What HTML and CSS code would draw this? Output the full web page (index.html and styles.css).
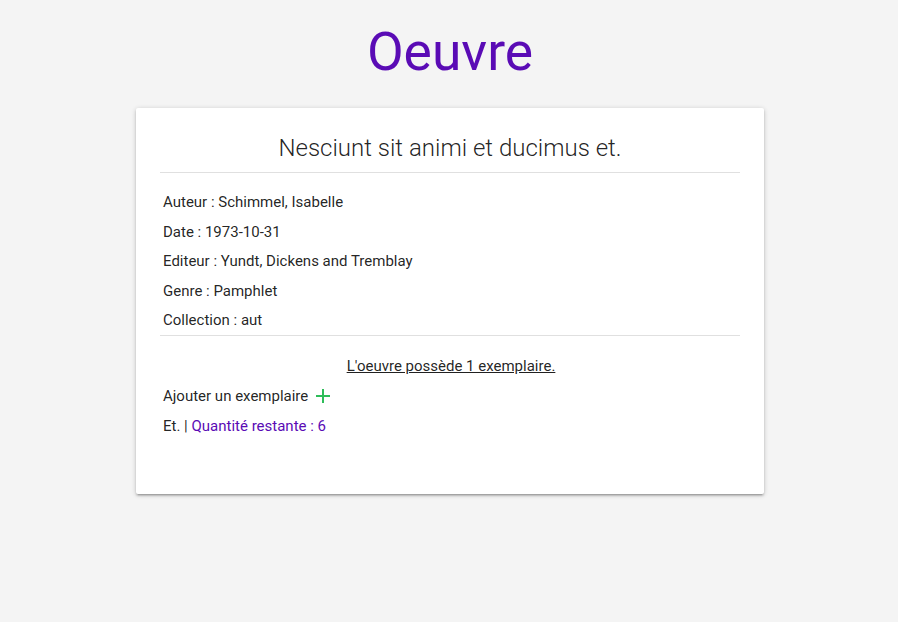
FILE: index.html
```html
<!DOCTYPE html>
<html lang="fr">
<head>
<meta charset="utf-8">
<title>Oeuvre</title>
<link rel="stylesheet" href="styles.css">
</head>
<body>
<main class="container">
  <h1 class="page-title">Oeuvre</h1>
  <section class="card">
    <h2 class="card-title">Nesciunt sit animi et ducimus et.</h2>
    <hr class="divider">
    <ul class="details">
      <li>Auteur : Schimmel, Isabelle</li>
      <li>Date : 1973-10-31</li>
      <li>Editeur : Yundt, Dickens and Tremblay</li>
      <li>Genre : Pamphlet</li>
      <li>Collection : aut</li>
    </ul>
    <hr class="divider divider-tight">
    <p class="count">L'oeuvre possède 1 exemplaire.</p>
    <p class="add">Ajouter un exemplaire
      <svg class="plus" width="14" height="14" viewBox="0 0 14 14"><path d="M7 0v14M0 7h14" stroke="#2ebd59" stroke-width="2" fill="none"/></svg>
    </p>
    <p class="copy">Et. | <span class="qty">Quantité restante : 6</span></p>
  </section>
</main>
</body>
</html>
```
FILE: styles.css
```css
html, body {
  margin: 0;
  padding: 0;
}
body {
  background: #f4f4f4;
  font-family: Roboto, "Liberation Sans", sans-serif;
  font-size: 15px;
  color: rgba(0,0,0,0.87);
  padding-left: 2px;
}
.container {
  width: 628px;
  margin: 0 auto;
  padding-bottom: 40px;
}
.page-title {
  margin: 0;
  padding-top: 20px;
  height: 108px;
  box-sizing: border-box;
  text-align: center;
  font-weight: 400;
  font-size: 53.4px;
  line-height: 64px;
  color: #5a0bb5;
}
.card {
  background: #fff;
  border-radius: 2px;
  padding: 24px 24px 53px;
  box-shadow: 0 2px 2px 0 rgba(0,0,0,0.14), 0 3px 1px -2px rgba(0,0,0,0.12), 0 1px 5px 0 rgba(0,0,0,0.2);
}
.card-title {
  margin: 0;
  text-align: center;
  font-weight: 300;
  font-size: 24px;
  line-height: 32px;
  color: rgba(0,0,0,0.87);
}
.divider {
  border: 0;
  border-top: 1px solid #e0e0e0;
  margin: 8px 0 0;
}
.divider-tight {
  margin-top: -1px;
}
.details {
  list-style: none;
  margin: 0;
  padding: 15px 3px 0;
}
.details li {
  line-height: 29.5px;
}
.count {
  margin: 0;
  padding: 17px 0 1px 2px;
  text-align: center;
  text-decoration: underline;
  line-height: 27px;
}
.add {
  margin: 0;
  padding-left: 3px;
  line-height: 30px;
  display: flex;
  align-items: center;
  gap: 8px;
}
.copy {
  margin: 0;
  padding-left: 3px;
  line-height: 30px;
}
.qty {
  color: #5a0bb5;
}
```
